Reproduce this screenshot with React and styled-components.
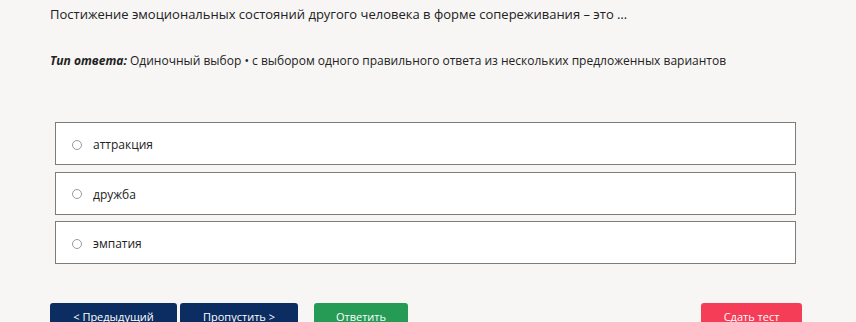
import React from 'react';
import styled, { createGlobalStyle } from 'styled-components';

const GlobalStyle = createGlobalStyle`
  html, body {
    margin: 0;
    background: #f7f6f5;
    font-family: "Open Sans", "Liberation Sans", sans-serif;
    color: #222;
  }
`;

const options = ['аттракция', 'дружба', 'эмпатия'];

const App = () => {
  return (
    <Page>
      <GlobalStyle />
      <Question>Постижение эмоциональных состояний другого человека в форме сопереживания – это …</Question>
      <AnswerType>
        <em>Тип ответа:</em> Одиночный выбор • с выбором одного правильного ответа из нескольких предложенных вариантов
      </AnswerType>
      <Options>
        {options.map((o) => (
          <Option key={o}>
            <Radio type="radio" name="answer" />
            {o}
          </Option>
        ))}
      </Options>
      <Buttons>
        <Button color="#0b2d61">&lt; Предыдущий</Button>
        <Button color="#0b2d61" $wide="118px">Пропустить &gt;</Button>
        <Button color="#259b55" $wide="94px" $gap="13px">Ответить</Button>
        <Spacer />
        <Button color="#f53d57" $wide="101px">Сдать тест</Button>
      </Buttons>
    </Page>
  );
};

const Page = styled.div`
  padding: 4px 54px 0 50px;
`;

const Question = styled.div`
  font-size: 13px;
  line-height: 20px;
`;

const AnswerType = styled.div`
  margin-top: 27px;
  font-size: 12px;
  line-height: 20px;
  em {
    font-weight: 700;
  }
`;

const Options = styled.div`
  margin: 51px 6px 0 5px;
  display: flex;
  flex-direction: column;
  gap: 6.5px;
`;

const Option = styled.label`
  display: flex;
  align-items: center;
  height: 41px;
  padding-top: 2px;
  box-sizing: border-box;
  height: 43px;
  background: #fff;
  border: 1px solid #7c7c7c;
  padding-left: 16px;
  font-size: 12px;
`;

const Radio = styled.input`
  appearance: none;
  width: 10px;
  height: 10px;
  margin: 0 11px 0 0;
  border: 1px solid #999;
  border-radius: 50%;
`;

const Buttons = styled.div`
  display: flex;
  margin-top: 39px;
  gap: 3px;
`;

const Button = styled.button`
  width: ${(p) => p.$wide || '127px'};
  margin-left: ${(p) => p.$gap || '0'};
  height: 26px;
  border: none;
  border-radius: 3px;
  background: ${(p) => p.color};
  color: #fff;
  font-family: "Open Sans", "Liberation Sans", sans-serif;
  font-size: 11px;
  padding: 1px 0 0;
  text-align: center;
  align-self: flex-start;
`;

const Spacer = styled.div`
  flex: 1;
`;

export default App;
